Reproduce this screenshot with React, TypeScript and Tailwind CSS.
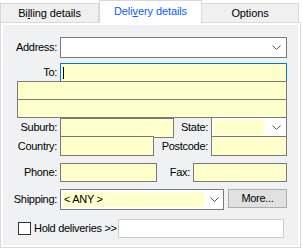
import type { ReactNode } from 'react';

function Chevron() {
  return (
    <svg width="9" height="5" viewBox="0 0 9 5" className="shrink-0">
      <polyline points="0.5,0.5 4.5,4.5 8.5,0.5" fill="none" stroke="#555" strokeWidth="1" />
    </svg>
  );
}

function Label({ w, children }: { w: string; children: ReactNode }) {
  return <div className={`${w} shrink-0 text-right pr-[3px] leading-[13px]`}>{children}</div>;
}

export default function App() {
  const edit = 'shrink-0 border border-[#7a7a7a] bg-[#ffffcc]';
  return (
    <div
      className="w-[303px] h-[249px] bg-white text-[11px] text-black tracking-[-0.3px] overflow-hidden"
      style={{ fontFamily: '"Liberation Sans", Arial, sans-serif' }}
    >
      {/* tabs */}
      <div className="flex items-end h-[22px] tracking-[-0.1px]">
        <div className="w-[99px] h-[19px] border border-b-0 border-[#d9d9d9] bg-[#f0f0f0] flex items-center justify-center">
          Bi<span className="underline">l</span>ling details
        </div>
        <div className="w-[103px] h-[23px] -mb-px relative z-10 border border-b-0 border-[#d9d9d9] bg-white flex items-center justify-center pb-[2px] text-[#0a5cff]">
          Deli<span className="underline">v</span>ery details
        </div>
        <div className="w-[97px] h-[19px] border border-b-0 border-l-0 border-[#d9d9d9] bg-[#f0f0f0] flex items-center justify-center">
          Options
        </div>
      </div>

      {/* page */}
      <div className="w-[301px] h-[226px] border border-[#d9d9d9] bg-white p-[2px] flex">
        <div className="flex-1 bg-[#eff1f2] flex flex-col pt-[12px]">
          {/* Address */}
          <div className="flex items-center">
            <Label w="w-[57px]">Address:</Label>
            <div className="w-[227px] h-[21px] border border-[#7a7a7a] bg-white flex items-center justify-end pr-[5px]">
              <Chevron />
            </div>
          </div>

          {/* To */}
          <div className="flex items-center mt-[5px]">
            <Label w="w-[57px]">To:</Label>
            <div className="w-[227px] h-[19px] border border-[#0078d7] bg-[#ffffcc] flex items-center pl-[2px]">
              <div className="w-px h-[12px] bg-black" />
            </div>
          </div>
          <div className={`${edit} ml-[14px] -mt-px w-[270px] h-[19px]`} />
          <div className={`${edit} ml-[14px] -mt-px w-[270px] h-[19px]`} />

          {/* Suburb / State */}
          <div className="flex items-center -mt-px">
            <Label w="w-[57px]">Suburb:</Label>
            <div className={`${edit} w-[114px] h-[20px]`} />
            <Label w="w-[37px]">State:</Label>
            <div className="w-[76px] h-[21px] border border-[#7a7a7a] bg-white flex items-center pl-[2px] pr-[5px] gap-[8px]">
              <div className="flex-1 h-[15px] bg-[#ffffcc]" />
              <Chevron />
            </div>
          </div>

          {/* Country / Postcode */}
          <div className="flex items-center -mt-[2px]">
            <Label w="w-[57px]">Country:</Label>
            <div className={`${edit} w-[94px] h-[20px]`} />
            <Label w="w-[57px]">Postcode:</Label>
            <div className={`${edit} w-[76px] h-[20px]`} />
          </div>

          {/* Phone / Fax */}
          <div className="flex items-center mt-[7px]">
            <Label w="w-[57px]">Phone:</Label>
            <div className={`${edit} w-[97px] h-[19px]`} />
            <Label w="w-[36px]">Fax:</Label>
            <div className={`${edit} w-[94px] h-[19px]`} />
          </div>

          {/* Shipping */}
          <div className="flex items-center mt-[7px]">
            <Label w="w-[57px]">Shipping:</Label>
            <div className="w-[164px] h-[21px] border border-[#7a7a7a] bg-white flex items-center pl-[2px] pr-[4px] gap-[6px]">
              <div className="flex-1 h-[15px] bg-[#ffffcc] flex items-center pl-px leading-[13px]">
                &lt; ANY &gt;
              </div>
              <Chevron />
            </div>
            <div className="ml-[4px] w-[59px] h-[19px] self-start border border-[#adadad] bg-[#e1e1e1] flex items-center justify-center leading-[13px]">
              More...
            </div>
          </div>

          {/* Hold deliveries */}
          <div className="flex items-center mt-[9px]">
            <div className="ml-[15px] w-[13px] h-[13px] border border-[#333] bg-white shrink-0" />
            <div className="ml-[3px] w-[84px] shrink-0 leading-[13px]">Hold deliveries &gt;&gt;</div>
            <div className="w-[166px] h-[19px] border border-[#cccccc] bg-white shrink-0" />
          </div>
        </div>
      </div>
    </div>
  );
}
